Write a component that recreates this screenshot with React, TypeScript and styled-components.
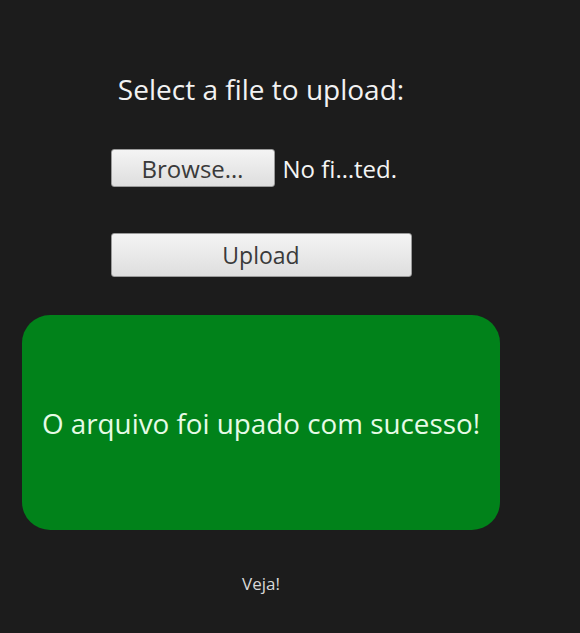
import styled, { createGlobalStyle } from "styled-components";

const GlobalStyle = createGlobalStyle`
  html, body {
    margin: 0;
    padding: 0;
    background: #1c1c1c;
  }
  body {
    font-family: "Open Sans", "Noto Sans", sans-serif;
  }
`;

const Page = styled.div`
  width: 580px;
  height: 633px;
  background: #1c1c1c;
  box-sizing: border-box;
  padding: 72px 0 0 22px;
  overflow: hidden;
`;

const Column = styled.div`
  width: 478px;
  display: flex;
  flex-direction: column;
  align-items: center;
`;

const Title = styled.h2`
  margin: 0;
  font-weight: 400;
  font-size: 28px;
  line-height: 34px;
  color: #f2f2f2;
`;

const Form = styled.form`
  width: 301px;
  display: flex;
  flex-direction: column;
  gap: 46px;
  margin-top: 43px;
`;

const FileRow = styled.div`
  display: flex;
  align-items: center;
  gap: 8px;
`;

const Button = styled.button<{ $wide?: boolean }>`
  width: ${(p) => (p.$wide ? "301px" : "164px")};
  height: ${(p) => (p.$wide ? "44px" : "38px")};
  padding: 0;
  border: 1px solid #9a9a9a;
  border-radius: 3px;
  background: linear-gradient(#f4f4f4, #dedede);
  color: #3a3a3a;
  font-family: "Open Sans", "Noto Sans", sans-serif;
  font-size: ${(p) => (p.$wide ? "23px" : "24px")};
  cursor: pointer;
`;

const FileName = styled.span`
  color: #f4f4f4;
  font-size: 24px;
`;

const Notice = styled.div`
  width: 478px;
  height: 215px;
  margin-top: 38px;
  border-radius: 28px;
  background: #01821a;
  color: #e6fbe6;
  font-size: 27.8px;
  display: flex;
  align-items: center;
  justify-content: center;
`;

const Link = styled.a`
  margin-top: 42px;
  color: #d8d8d8;
  font-size: 17px;
  text-decoration: none;
`;

export default function App() {
  return (
    <>
      <GlobalStyle />
      <Page>
        <Column>
          <Title>Select a file to upload:</Title>
          <Form onSubmit={(e) => e.preventDefault()}>
            <FileRow>
              <Button type="button">Browse…</Button>
              <FileName>No fi…ted.</FileName>
            </FileRow>
            <Button $wide type="submit">Upload</Button>
          </Form>
          <Notice>O arquivo foi upado com sucesso!</Notice>
          <Link href="#">Veja!</Link>
        </Column>
      </Page>
    </>
  );
}
